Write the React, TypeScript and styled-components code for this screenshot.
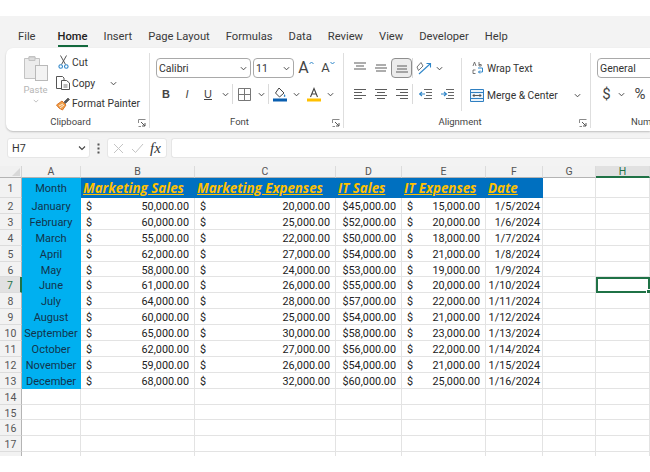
import React from "react";
import styled, { createGlobalStyle } from "styled-components";

const GlobalStyle = createGlobalStyle`
  html, body { margin: 0; padding: 0; background: #fff; }
  body { font-family: Roboto, "Noto Sans", sans-serif; color: #2b2b2b; }
`;

const Page = styled.div`
  width: 650px;
  height: 472px;
  padding-top: 16px;
  box-sizing: border-box;
  overflow: hidden;
  background: #fff;
`;

const Excel = styled.div`
  height: 440px;
  background: #f3f3f3;
  display: flex;
  flex-direction: column;
  overflow: hidden;
`;

const TabBar = styled.div`
  height: 32px;
  padding: 8px 0 0 18px;
  box-sizing: border-box;
  display: flex;
  gap: 16px;
  font-size: 11.2px;
  line-height: 26px;
  white-space: nowrap;
  color: #333;
`;

const Tab = styled.div<{ $active?: boolean }>`
  height: 23px;
  box-sizing: border-box;
  font-weight: ${(p) => (p.$active ? 500 : 400)};
  border-bottom: 2px solid ${(p) => (p.$active ? "#13693d" : "transparent")};
  color: ${(p) => (p.$active ? "#222" : "#3a3a3a")};
  &:first-child { margin-right: 6px; }
`;

const Ribbon = styled.div`
  height: 83px;
  margin-left: 6px;
  background: #fff;
  border-radius: 7px 0 0 7px;
  box-shadow: 0 1px 2px rgba(0, 0, 0, 0.22);
  display: flex;
  overflow: hidden;
`;

const Group = styled.div<{ $w: number; $last?: boolean }>`
  width: ${(p) => p.$w}px;
  flex: none;
  position: relative;
  display: flex;
  flex-direction: column;
  margin: 5px 0 3px;
  box-sizing: border-box;
  border-right: ${(p) => (p.$last ? "none" : "1px solid #dedede")};
`;

const GroupBody = styled.div`
  flex: 1;
  display: flex;
  min-height: 0;
`;

const GroupLabel = styled.div`
  height: 14px;
  padding-right: 14px;
  font-size: 9.5px;
  line-height: 16px;
  text-align: center;
  color: #454545;
  white-space: nowrap;
`;

const Launcher = styled.svg`
  position: absolute;
  right: 3px;
  bottom: 1px;
`;

const PasteColumn = styled.div`
  width: 50px;
  padding: 2px 7px 0 16px;
  box-sizing: border-box;
  display: flex;
  flex-direction: column;
  align-items: center;
  font-size: 9.5px;
  color: #b5b5b5;
  line-height: 12px;
  gap: 2px;
`;

const ClipActions = styled.div`
  display: flex;
  flex-direction: column;
  margin-top: -1px;
`;

const ClipAction = styled.div`
  height: 21px;
  display: flex;
  align-items: center;
  gap: 2px;
  font-size: 10.3px;
  white-space: nowrap;
  color: #333;
`;

const ActionIcon = styled.span`
  width: 14px;
  display: flex;
  justify-content: center;
  flex: none;
`;

const ActionChevron = styled.span<{ $left: number }>`
  margin-left: ${(p) => p.$left}px;
  display: flex;
`;

const FontColumn = styled.div`
  padding: 5px 0 0 6px;
  display: flex;
  flex-direction: column;
  gap: 6px;
`;

const ToolRow = styled.div<{ $gap?: number }>`
  display: flex;
  align-items: center;
  gap: ${(p) => p.$gap ?? 2}px;
  height: 20px;
`;

const Combo = styled.div<{ $w: number }>`
  width: ${(p) => p.$w}px;
  height: 20px;
  box-sizing: border-box;
  border: 1px solid #a9a9a9;
  border-radius: 4px;
  padding: 0 3px 0 2px;
  display: flex;
  align-items: center;
  justify-content: space-between;
  font-size: 10.5px;
  color: #333;
  background: #fff;
`;

const IconSlot = styled.div<{ $w: number; $active?: boolean }>`
  width: ${(p) => p.$w}px;
  height: 20px;
  flex: none;
  display: flex;
  align-items: center;
  justify-content: center;
  box-sizing: border-box;
  border-radius: 4px;
  border: ${(p) => (p.$active ? "1px solid #8e8e8e" : "none")};
  background: ${(p) => (p.$active ? "#ececec" : "transparent")};
`;

const Letter = styled.span<{ $bold?: boolean; $italic?: boolean; $under?: boolean }>`
  font-family: "Liberation Sans", sans-serif;
  font-size: 11px;
  font-weight: ${(p) => (p.$bold ? 700 : 400)};
  font-style: ${(p) => (p.$italic ? "italic" : "normal")};
  text-decoration: ${(p) => (p.$under ? "underline" : "none")};
  color: #444;
`;

const BigGlyph = styled.span<{ $size: number }>`
  font-size: ${(p) => p.$size}px;
  line-height: 20px;
  color: #444;
`;

const Caret = styled.svg`
  align-self: flex-start;
  margin-top: 3px;
`;

const VSep = styled.div`
  width: 1px;
  height: 20px;
  background: #dadada;
  flex: none;
`;

const AlignColumns = styled.div`
  display: flex;
  flex-direction: column;
  gap: 6px;
  padding: 5px 0 0 6px;
  width: 117px;
  flex: none;
  box-sizing: border-box;
`;

const WrapColumn = styled.div`
  display: flex;
  flex-direction: column;
  gap: 7px;
  padding: 0 0 0 8px;
  border-left: 1px solid #dedede;
  height: 53px;
  align-self: flex-start;
  margin-top: 5px;
`;

const WrapAction = styled.div`
  display: flex;
  align-items: center;
  gap: 3px;
  height: 20px;
  font-size: 10.3px;
  white-space: nowrap;
  color: #333;
`;

const FormulaBar = styled.div`
  height: 20px;
  margin: 7px 0 8px 7px;
  display: flex;
  align-items: stretch;
  flex: none;
`;

const NameBox = styled.div`
  width: 83px;
  box-sizing: border-box;
  background: #fff;
  border: 1px solid #e6e6e6;
  border-radius: 3px;
  padding: 0 3px 0 4px;
  display: flex;
  align-items: center;
  justify-content: space-between;
  font-size: 10.8px;
  color: #333;
`;

const Dots = styled.div`
  width: 17px;
  display: flex;
  align-items: center;
  justify-content: center;
`;

const FxBox = styled.div`
  width: 60px;
  box-sizing: border-box;
  background: #fff;
  border: 1px solid #e6e6e6;
  border-radius: 3px;
  display: flex;
  align-items: center;
  justify-content: space-around;
  padding: 0 2px;
`;

const Fx = styled.span`
  font-family: "Liberation Serif", serif;
  font-style: italic;
  font-size: 15px;
  color: #333;
`;

const FormulaInput = styled.div`
  flex: 1;
  margin-left: 4px;
  background: #fff;
  border: 1px solid #e6e6e6;
  border-right: none;
  border-radius: 3px 0 0 3px;
`;

const Sheet = styled.div`
  display: grid;
  grid-template-columns: 22px 59px 114px 141px 66px 84px 57px 53px 54px;
  grid-template-rows: 12px 20px repeat(17, 15.9px) 8px;
  background: #fff;
  flex: 1;
  min-height: 0;
  overflow: hidden;
  font-size: 10.8px;
  line-height: 15px;
  color: #222;
`;

const Corner = styled.div`
  background: #f0f0f0;
  border-bottom: 1px solid #b4b4b4;
  border-right: 1px solid #d5d5d5;
  position: relative;
  &::after {
    content: "";
    position: absolute;
    right: 1px;
    bottom: 1px;
    border-style: solid;
    border-width: 0 0 8px 8px;
    border-color: transparent transparent #d8d8d8 transparent;
  }
`;

const ColHead = styled.div<{ $active?: boolean }>`
  background: ${(p) => (p.$active ? "#e1e1e1" : "#f2f2f2")};
  border-right: 1px solid #dcdcdc;
  border-bottom: ${(p) => (p.$active ? "2px solid #1f7246" : "1px solid #b4b4b4")};
  color: ${(p) => (p.$active ? "#1f7246" : "#555")};
  font-size: 10.5px;
  line-height: 12px;
  text-align: center;
`;

const RowHead = styled.div<{ $active?: boolean }>`
  background: ${(p) => (p.$active ? "#e1e1e1" : "#f2f2f2")};
  border-right: ${(p) => (p.$active ? "2px solid #1f7246" : "1px solid #b4b4b4")};
  border-bottom: 1px solid #dcdcdc;
  color: ${(p) => (p.$active ? "#1f7246" : "#555")};
  font-size: 10.5px;
  padding-top: 2px;
  display: flex;
  align-items: center;
  justify-content: center;
  box-sizing: border-box;
`;

const Cell = styled.div<{ $fill?: string; $align?: string; $selected?: boolean; $pr?: number; $pl?: number }>`
  position: relative;
  box-sizing: border-box;
  background: ${(p) => p.$fill ?? "#fff"};
  border-right: 1px solid ${(p) => p.$fill ?? "#e3e3e3"};
  border-bottom: 1px solid ${(p) => p.$fill ?? "#e3e3e3"};
  display: flex;
  align-items: center;
  justify-content: ${(p) => p.$align ?? "flex-start"};
  padding: 2px ${(p) => p.$pr ?? 5}px 0 ${(p) => p.$pl ?? 5}px;
  white-space: nowrap;
  overflow: hidden;
  ${(p) => p.$selected && "outline: 2px solid #1f7246; outline-offset: -2px; overflow: visible;"}
`;

const Handle = styled.span`
  position: absolute;
  right: -2px;
  bottom: -2px;
  width: 5px;
  height: 5px;
  background: #1f7246;
  border: 1px solid #fff;
  box-sizing: border-box;
`;

const TitleText = styled.span`
  font-family: "Open Sans", sans-serif;
  font-weight: 700;
  font-style: italic;
  font-size: 13.3px;
  color: #ffc000;
  text-decoration: underline;
`;

const MonthText = styled.span`
  color: #12344d;
  font-size: 11px;
`;

const Accounting = styled.div`
  flex: 1;
  display: flex;
  justify-content: space-between;
`;

const Chevron = ({ size = 7, color = "#444" }: { size?: number; color?: string }) => (
  <svg width={size} height={size} viewBox="0 0 8 8">
    <path d="M1 2.5 4 5.5 7 2.5" fill="none" stroke={color} strokeWidth="1.1" />
  </svg>
);

const LauncherIcon = () => (
  <Launcher width="8" height="8" viewBox="0 0 8 8">
    <path d="M.5 4V.5H7.5M.5 7.5H3" fill="none" stroke="#8a8a8a" />
    <path d="M3 3 7 7M7 4V7H4" fill="none" stroke="#555" />
  </Launcher>
);

const PasteIcon = () => (
  <svg width="24" height="27" viewBox="0 0 24 27">
    <path d="M.5 3.5h4.500v-2h6v2h4.500v20H.5z" fill="#ececec" stroke="#c3c3c3" />
    <path d="M5 2h6v3.500H5z" fill="#dcdcdc" stroke="#c3c3c3" />
    <rect x="11.500" y="10.500" width="12" height="15" fill="#f3f3f3" stroke="#b9b9b9" />
  </svg>
);

const CutIcon = () => (
  <svg width="11" height="14" viewBox="0 0 11 14">
    <path d="M2.500 .5 7.500 9.500M8.500 .5 3.500 9.500" fill="none" stroke="#555" strokeWidth="1" />
    <circle cx="2.700" cy="11.500" r="1.800" fill="none" stroke="#2f86c9" strokeWidth="1.100" />
    <circle cx="8.300" cy="11.500" r="1.800" fill="none" stroke="#2f86c9" strokeWidth="1.100" />
  </svg>
);

const CopyIcon = () => (
  <svg width="14" height="14" viewBox="0 0 14 14">
    <path d="M.5 .5H6.500L8 2V12.500H.5z" fill="#fff" stroke="#555" />
    <path d="M5.500 4.500H10.500L13.500 7V13.500H5.500z" fill="#fff" stroke="#555" />
    <path d="M7.500 9H11.500M7.500 11H11.500" stroke="#777" />
  </svg>
);

const PainterIcon = () => (
  <svg width="14" height="14" viewBox="0 0 14 14">
    <path d="M.5 8 6 4 10 8 6.500 13 3 11z" fill="#f0a04a" stroke="#d9762a" />
    <path d="M3 9 7 7M4 11 8 8" stroke="#fff" strokeWidth=".8" />
    <path d="M8 5 12 1 13.500 2.500 9.500 6.500z" fill="#555" stroke="#444" strokeWidth=".6" />
  </svg>
);

const BordersIcon = () => (
  <svg width="13" height="13" viewBox="0 0 13 13">
    <path d="M.5 .5h12v12H.5zM6.500 .5v12M.5 6.500h12" fill="none" stroke="#777" />
  </svg>
);

const FillIcon = () => (
  <svg width="14" height="15" viewBox="0 0 14 15">
    <path d="M6 1 11 6 6.500 10 2.500 6z" fill="#fff" stroke="#444" />
    <path d="M11.500 7c1 1.400 1.200 2.200.5 2.800-.8.3-1.400-.3-1.200-1z" fill="#2f86c9" />
    <rect x="0" y="11.500" width="14" height="3" fill="#0a5fb0" />
  </svg>
);

const TextColorIcon = () => (
  <svg width="14" height="15" viewBox="0 0 14 15">
    <path d="M3.500 10 7 1.500 10.500 10M5 7h4" fill="none" stroke="#444" strokeWidth="1.100" />
    <rect x="0" y="11.500" width="14" height="3" fill="#ffc000" />
  </svg>
);

const lineSets: Record<string, { start: number; lines: [number, number][] }> = {
  top: { start: 1, lines: [[1, 13], [3, 11], [1, 13]] },
  middle: { start: 3, lines: [[2, 12], [1, 13], [2, 12]] },
  bottom: { start: 4, lines: [[2, 12], [2, 12], [1, 13]] },
  left: { start: 1.5, lines: [[1, 13], [1, 9], [1, 13], [1, 9]] },
  center: { start: 1.5, lines: [[1, 13], [3, 11], [1, 13], [3, 11]] },
  right: { start: 1.5, lines: [[1, 13], [5, 13], [1, 13], [5, 13]] },
};

const AlignIcon = ({ kind }: { kind: string }) => {
  const { start, lines } = lineSets[kind];
  return (
    <svg width="14" height="13" viewBox="0 0 14 13">
      {lines.map(([a, b], i) => (
        <path key={i} d={`M${a} ${start + i * 3}H${b}`} stroke="#5c5c5c" strokeWidth="1.100" />
      ))}
    </svg>
  );
};

const OrientIcon = () => (
  <svg width="16" height="14" viewBox="0 0 16 14">
    <path d="M3 13 14 3" stroke="#2f86c9" strokeWidth="1.100" />
    <path d="M10.500 2.500h4v4" fill="none" stroke="#2f86c9" strokeWidth="1.100" />
    <path d="M1 6 5 1.500 7 5 2.500 9.500z" fill="none" stroke="#666" strokeWidth=".9" />
  </svg>
);

const IndentIcon = ({ flip }: { flip?: boolean }) => (
  <svg width="13" height="12" viewBox="0 0 13 12">
    <path d="M5 1.500H13M7 4.500H13M7 7.500H13M5 10.500H13" stroke="#666" />
    {flip ? (
      <path d="M0 6H5M3 4 5.500 6 3 8" fill="none" stroke="#2f86c9" strokeWidth="1.100" />
    ) : (
      <path d="M6 6H1M3 4 .5 6 3 8" fill="none" stroke="#2f86c9" strokeWidth="1.100" />
    )}
  </svg>
);

const WrapIcon = () => (
  <svg width="13" height="14" viewBox="0 0 13 14">
    <path d="M2 5 3.500 1 5 5M8 1V5M8 3.500h2.200V5H8M4.500 9H2V12.500H4.500" fill="none" stroke="#666" strokeWidth=".9" />
    <path d="M7 7H11.500V11H7.500M9 9.500 7.500 11 9 12.500" fill="none" stroke="#2f86c9" strokeWidth="1" />
  </svg>
);

const MergeIcon = () => (
  <svg width="14" height="13" viewBox="0 0 14 13">
    <path d="M.5 .5h13v12H.5z" fill="#eaf3fb" stroke="#2f7fc1" />
    <path d="M.5 3.500h13M.5 9.500h13" stroke="#2f7fc1" />
    <path d="M3 6.500h8M4.500 5 3 6.500 4.500 8M9.500 5 11 6.500 9.500 8" fill="none" stroke="#444" strokeWidth=".9" />
  </svg>
);

const CrossIcon = () => (
  <svg width="11" height="11" viewBox="0 0 11 11">
    <path d="M1 1 10 10M10 1 1 10" stroke="#c4c4c4" strokeWidth="1" />
  </svg>
);

const CheckIcon = () => (
  <svg width="13" height="11" viewBox="0 0 13 11">
    <path d="M1 6 4.500 9.500 12 1" fill="none" stroke="#c4c4c4" strokeWidth="1" />
  </svg>
);

const DotsIcon = () => (
  <svg width="3" height="11" viewBox="0 0 3 11">
    <path d="M.5 .5h2v2h-2zM.5 4.500h2v2h-2zM.5 8.500h2v2h-2z" fill="#555" />
  </svg>
);

const COLS = ["A", "B", "C", "D", "E", "F", "G", "H"];
const TITLES = ["Marketing Sales", "Marketing Expenses", "IT Sales", "IT Expenses", "Date"];

const DATA: [string, string, string, string, string, string][] = [
  ["January", "50,000.00", "20,000.00", "$45,000.00", "15,000.00", "1/5/2024"],
  ["February", "60,000.00", "25,000.00", "$52,000.00", "20,000.00", "1/6/2024"],
  ["March", "55,000.00", "22,000.00", "$50,000.00", "18,000.00", "1/7/2024"],
  ["April", "62,000.00", "27,000.00", "$54,000.00", "21,000.00", "1/8/2024"],
  ["May", "58,000.00", "24,000.00", "$53,000.00", "19,000.00", "1/9/2024"],
  ["June", "61,000.00", "26,000.00", "$55,000.00", "20,000.00", "1/10/2024"],
  ["July", "64,000.00", "28,000.00", "$57,000.00", "22,000.00", "1/11/2024"],
  ["August", "60,000.00", "25,000.00", "$54,000.00", "21,000.00", "1/12/2024"],
  ["September", "65,000.00", "30,000.00", "$58,000.00", "23,000.00", "1/13/2024"],
  ["October", "62,000.00", "27,000.00", "$56,000.00", "22,000.00", "1/14/2024"],
  ["November", "59,000.00", "26,000.00", "$54,000.00", "21,000.00", "1/15/2024"],
  ["December", "68,000.00", "32,000.00", "$60,000.00", "25,000.00", "1/16/2024"],
];

const Money = ({ value }: { value: string }) => (
  <Accounting>
    <span>$</span>
    <span>{value}</span>
  </Accounting>
);

const SheetGrid = () => (
  <Sheet>
    <Corner />
    {COLS.map((c) => (
      <ColHead key={c} $active={c === "H"}>{c}</ColHead>
    ))}

    <RowHead>1</RowHead>
    <Cell $fill="#00b0f0" $align="center"><MonthText>Month</MonthText></Cell>
    {TITLES.map((t) => (
      <Cell key={t} $fill="#0070c0" $pl={2} $pr={0}><TitleText>{t}</TitleText></Cell>
    ))}
    <Cell />
    <Cell />

    {DATA.map((row, i) => (
      <React.Fragment key={row[0]}>
        <RowHead $active={i === 5}>{i + 2}</RowHead>
        <Cell $fill="#00b0f0" $align="center" $pl={0} $pr={0}><MonthText>{row[0]}</MonthText></Cell>
        <Cell><Money value={row[1]} /></Cell>
        <Cell><Money value={row[2]} /></Cell>
        <Cell $align="flex-end">{row[3]}</Cell>
        <Cell><Money value={row[4]} /></Cell>
        <Cell $align="flex-end" $pr={2} $pl={0}>{row[5]}</Cell>
        <Cell />
        <Cell $selected={i === 5}>{i === 5 && <Handle />}</Cell>
      </React.Fragment>
    ))}

    {[14, 15, 16, 17, 18].map((n) => (
      <React.Fragment key={n}>
        <RowHead>{n < 18 ? n : ""}</RowHead>
        {COLS.map((c) => (
          <Cell key={c} />
        ))}
      </React.Fragment>
    ))}
  </Sheet>
);

const RibbonBar = () => (
  <Ribbon>
    <Group $w={144}>
      <GroupBody>
        <PasteColumn>
          <PasteIcon />
          <div>Paste</div>
          <Chevron size={6} color="#b5b5b5" />
        </PasteColumn>
        <ClipActions>
          <ClipAction><ActionIcon><CutIcon /></ActionIcon> Cut</ClipAction>
          <ClipAction>
            <ActionIcon><CopyIcon /></ActionIcon> Copy
            <ActionChevron $left={13}><Chevron /></ActionChevron>
          </ClipAction>
          <ClipAction><ActionIcon><PainterIcon /></ActionIcon> Format Painter</ClipAction>
        </ClipActions>
      </GroupBody>
      <GroupLabel>Clipboard</GroupLabel>
      <LauncherIcon />
    </Group>

    <Group $w={194}>
      <GroupBody>
        <FontColumn>
          <ToolRow>
            <Combo $w={95}>Calibri <Chevron /></Combo>
            <Combo $w={41}>11 <Chevron /></Combo>
            <IconSlot $w={20}>
              <BigGlyph $size={16}>A</BigGlyph>
              <Caret width="5" height="4" viewBox="0 0 5 4"><path d="M.5 3 2.500 1 4.500 3" fill="none" stroke="#2f86c9" /></Caret>
            </IconSlot>
            <IconSlot $w={20}>
              <BigGlyph $size={13}>A</BigGlyph>
              <Caret width="5" height="4" viewBox="0 0 5 4"><path d="M.5 1 2.500 3 4.500 1" fill="none" stroke="#2f86c9" /></Caret>
            </IconSlot>
          </ToolRow>
          <ToolRow $gap={0}>
            <IconSlot $w={20}><Letter $bold>B</Letter></IconSlot>
            <IconSlot $w={22}><Letter $italic>I</Letter></IconSlot>
            <IconSlot $w={20}><Letter $under>U</Letter></IconSlot>
            <IconSlot $w={14}><Chevron /></IconSlot>
            <VSep />
            <IconSlot $w={22}><BordersIcon /></IconSlot>
            <IconSlot $w={13}><Chevron /></IconSlot>
            <VSep />
            <IconSlot $w={21}><FillIcon /></IconSlot>
            <IconSlot $w={12}><Chevron /></IconSlot>
            <IconSlot $w={24}><TextColorIcon /></IconSlot>
            <IconSlot $w={8}><Chevron /></IconSlot>
          </ToolRow>
        </FontColumn>
      </GroupBody>
      <GroupLabel>Font</GroupLabel>
      <LauncherIcon />
    </Group>

    <Group $w={247}>
      <GroupBody>
        <AlignColumns>
          <ToolRow $gap={0}>
            <IconSlot $w={20}><AlignIcon kind="top" /></IconSlot>
            <IconSlot $w={21}><AlignIcon kind="middle" /></IconSlot>
            <IconSlot $w={21} $active><AlignIcon kind="bottom" /></IconSlot>
            <VSep />
            <IconSlot $w={22}><OrientIcon /></IconSlot>
            <IconSlot $w={8}><Chevron /></IconSlot>
          </ToolRow>
          <ToolRow $gap={0}>
            <IconSlot $w={19}><AlignIcon kind="left" /></IconSlot>
            <IconSlot $w={23}><AlignIcon kind="center" /></IconSlot>
            <IconSlot $w={20}><AlignIcon kind="right" /></IconSlot>
            <VSep />
            <IconSlot $w={24}><IndentIcon /></IconSlot>
            <IconSlot $w={20}><IndentIcon flip /></IconSlot>
          </ToolRow>
        </AlignColumns>
        <WrapColumn>
          <WrapAction><ActionIcon><WrapIcon /></ActionIcon> Wrap Text</WrapAction>
          <WrapAction>
            <ActionIcon><MergeIcon /></ActionIcon> Merge &amp; Center
            <ActionChevron $left={13}><Chevron /></ActionChevron>
          </WrapAction>
        </WrapColumn>
      </GroupBody>
      <GroupLabel>Alignment</GroupLabel>
      <LauncherIcon />
    </Group>

    <Group $w={128} $last>
      <GroupBody>
        <FontColumn>
          <ToolRow>
            <Combo $w={90}>General</Combo>
          </ToolRow>
          <ToolRow $gap={0}>
            <IconSlot $w={19}><BigGlyph $size={15}>$</BigGlyph></IconSlot>
            <IconSlot $w={11}><Chevron /></IconSlot>
            <IconSlot $w={26}><BigGlyph $size={15}>%</BigGlyph></IconSlot>
          </ToolRow>
        </FontColumn>
      </GroupBody>
      <GroupLabel>Number</GroupLabel>
    </Group>
  </Ribbon>
);

export default function App() {
  return (
    <Page>
      <GlobalStyle />
      <Excel>
        <TabBar>
          {["File", "Home", "Insert", "Page Layout", "Formulas", "Data", "Review", "View", "Developer", "Help"].map((t) => (
            <Tab key={t} $active={t === "Home"}>{t}</Tab>
          ))}
        </TabBar>
        <RibbonBar />
        <FormulaBar>
          <NameBox>H7 <Chevron size={8} /></NameBox>
          <Dots><DotsIcon /></Dots>
          <FxBox>
            <CrossIcon />
            <CheckIcon />
            <Fx>fx</Fx>
          </FxBox>
          <FormulaInput />
        </FormulaBar>
        <SheetGrid />
      </Excel>
    </Page>
  );
}
